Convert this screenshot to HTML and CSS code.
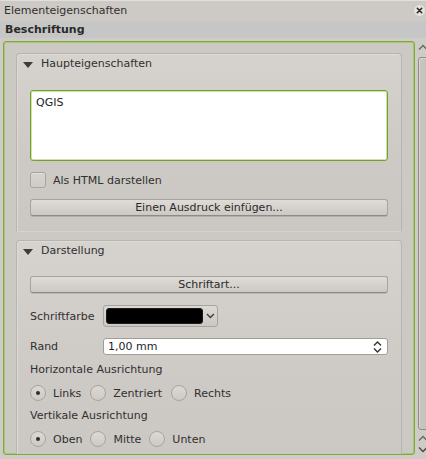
FILE: index.html
```html
<!DOCTYPE html>
<html lang="de">
<head>
<meta charset="utf-8">
<title>Elementeigenschaften</title>
<link rel="stylesheet" href="styles.css">
</head>
<body>
<div class="window">
  <div class="titlebar">
    <span class="title">Elementeigenschaften</span>
    <span class="close">
      <svg width="11" height="11" viewBox="0 0 11 11"><circle cx="5.5" cy="5.5" r="5.5" fill="#e6e2de"/><path d="M3.3 3.3 L7.7 7.7 M7.7 3.3 L3.3 7.7" stroke="#2a2a2a" stroke-width="1.6" stroke-linecap="round"/></svg>
    </span>
  </div>
  <div class="header">Beschriftung</div>
  <div class="main">
    <div class="frame">
      <section class="group g1">
        <div class="group-head"><span class="tri"></span>Haupteigenschaften</div>
        <div class="textedit">QGIS</div>
        <div class="check"><span class="box"></span><span>Als HTML darstellen</span></div>
        <div class="btn btn-expr">Einen Ausdruck einfügen...</div>
      </section>
      <section class="group g2">
        <div class="group-head"><span class="tri"></span>Darstellung</div>
        <div class="btn btn-font">Schriftart...</div>
        <div class="row row-color">
          <span class="lbl">Schriftfarbe</span>
          <div class="colorbtn">
            <span class="swatch"></span>
            <svg class="chev" width="9" height="6" viewBox="0 0 9 6"><path d="M1 1 L4.5 4.5 L8 1" fill="none" stroke="#3a3a3a" stroke-width="1.4"/></svg>
          </div>
        </div>
        <div class="row row-rand">
          <span class="lbl">Rand</span>
          <div class="spin">
            <span>1,00 mm</span>
            <svg class="spin-arrows" width="9" height="14" viewBox="0 0 9 14"><path d="M1 5.5 L4.5 2 L8 5.5 M1 8.5 L4.5 12 L8 8.5" fill="none" stroke="#333" stroke-width="1.4"/></svg>
          </div>
        </div>
        <div class="caption cap-h">Horizontale Ausrichtung</div>
        <div class="radios radios-h">
          <div class="radio"><span class="circle on"></span><span>Links</span></div>
          <div class="radio"><span class="circle"></span><span>Zentriert</span></div>
          <div class="radio"><span class="circle"></span><span>Rechts</span></div>
        </div>
        <div class="caption cap-v">Vertikale Ausrichtung</div>
        <div class="radios radios-v">
          <div class="radio"><span class="circle on"></span><span>Oben</span></div>
          <div class="radio"><span class="circle"></span><span>Mitte</span></div>
          <div class="radio"><span class="circle"></span><span>Unten</span></div>
        </div>
      </section>
    </div>
    <div class="scrollbar">
      <svg class="sb-up" width="8" height="7" viewBox="0 0 8 7"><path d="M1 5.5 L5 1.5 L9 5.5" fill="none" stroke="#6a6662" stroke-width="1.3"/></svg>
      <div class="handle"></div>
      <svg class="sb-up2" width="8" height="7" viewBox="0 0 8 7"><path d="M1 5.5 L5 1.5 L9 5.5" fill="none" stroke="#6a6662" stroke-width="1.3"/></svg>
      <svg class="sb-down" width="8" height="7" viewBox="0 0 8 7"><path d="M1 1.5 L5 5.5 L9 1.5" fill="none" stroke="#4a4642" stroke-width="1.3"/></svg>
    </div>
  </div>
</div>
</body>
</html>
```

FILE: styles.css
```css
* { box-sizing: border-box; }
html, body { margin: 0; padding: 0; }
body {
  background: #cfcbc7;
  font-family: "DejaVu Sans", "Liberation Sans", sans-serif;
  font-size: 11px;
  color: #303030;
}
.window {
  width: 426px;
  height: 459px;
  overflow: hidden;
  display: flex;
  flex-direction: column;
}
.titlebar {
  height: 21px;
  flex: none;
  border-top: 1px solid #e2dfdb;
  background: #cdc9c5;
  display: flex;
  align-items: center;
  justify-content: space-between;
  padding: 0 1px 0 4px;
}
.title { line-height: 14px; }
.close { display: flex; width: 11px; height: 11px; margin-top: -1px; }
.header {
  height: 17px;
  flex: none;
  background: #c6c6c6;
  font-weight: bold;
  line-height: 17px;
  padding-left: 5px;
  color: #2a2a2a;
}
.main {
  flex: none;
  margin-top: 3px;
  display: flex;
  align-items: flex-start;
}
.frame {
  width: 412px;
  height: 414px;
  margin-left: 3px;
  border: 1px solid #7eaa3c;
  box-shadow: inset 0 0 0 1px #a7c775;
  border-radius: 3px;
  overflow: hidden;
  padding: 11px 12px 0 12px;
  background: #ccc8c4;
}
.group {
  border: 1px solid #b8b4b0;
  border-bottom-color: transparent;
  border-radius: 4px 4px 0 0;
  background: linear-gradient(#d6d2ce, #cdc9c5 60%, #cbc7c3);
  box-shadow: inset 1px 1px 0 #dedad6;
  padding: 0 13px;
}
.g1 { height: 179px; }
.g2 { margin-top: 8px; height: 240px; }
.group-head {
  height: 19px;
  display: flex;
  align-items: center;
  padding-left: 6px;
  margin-left: -13px;
}
.tri {
  width: 0; height: 0;
  border-left: 5px solid transparent;
  border-right: 5px solid transparent;
  border-top: 6px solid #3c3c3c;
  margin-right: 8px;
  margin-top: 2px;
}
.textedit {
  margin-top: 17px;
  height: 71px;
  background: #fff;
  border: 1px solid #73a22c;
  box-shadow: inset 0 0 0 1px #cde2ad;
  border-radius: 3px;
  padding: 5px 5px;
  line-height: 13px;
  color: #1e1e1e;
}
.check {
  margin-top: 11px;
  height: 16px;
  display: flex;
  align-items: center;
  gap: 7px;
}
.box {
  width: 16px; height: 16px;
  border: 1px solid #a8a4a0;
  border-radius: 3px;
  background: linear-gradient(#d8d4d0, #cfcbc7);
  box-shadow: inset 0 1px 0 #e4e0dc;
}
.btn {
  height: 17px;
  border: 1px solid #a7a39f;
  border-bottom-color: #8e8a86;
  border-radius: 3px;
  background: linear-gradient(#dfdbd7, #ccc8c4);
  box-shadow: 0 1px 0 rgba(0,0,0,0.12);
  text-align: center;
  line-height: 15px;
  color: #2a2a2a;
}
.btn-expr { margin-top: 11px; }
.btn-font { margin-top: 16px; }
.row { display: flex; align-items: center; }
.lbl { width: 73px; flex: none; }
.row-color { margin-top: 12px; height: 22px; }
.colorbtn {
  width: 115px;
  height: 22px;
  border: 1px solid #a7a39f;
  border-radius: 3px;
  background: linear-gradient(#dcd8d4, #cbc7c3);
  display: flex;
  align-items: center;
  padding: 0 2px;
}
.swatch {
  width: 99px;
  height: 16px;
  background: #000;
  border-radius: 3px;
  border: 1px solid #1a1a1a;
}
.chev { margin-left: 3px; }
.row-rand { margin-top: 11px; height: 17px; }
.spin {
  width: 285px;
  height: 17px;
  background: #fff;
  border: 1px solid #a19d99;
  border-radius: 3px;
  display: flex;
  align-items: center;
  justify-content: space-between;
  padding: 0 5px 0 4px;
  color: #1e1e1e;
}
.caption { height: 16px; line-height: 16px; margin-top: 7px; }
.radios { margin-top: 7px; height: 16px; display: flex; align-items: center; gap: 8px; }
.radios-h { gap: 9px; }
.radio { display: flex; align-items: center; gap: 7px; }
.circle {
  width: 16px; height: 16px;
  border-radius: 50%;
  border: 1px solid #a7a39f;
  background: linear-gradient(#dcd8d4, #cdc9c5);
  display: flex;
  align-items: center;
  justify-content: center;
}
.circle.on::after {
  content: "";
  width: 4px; height: 4px;
  border-radius: 50%;
  background: #2e2e2e;
}
.scrollbar {
  width: 8px;
  height: 414px;
  margin-left: 3px;
  overflow: hidden;
  display: flex;
  flex-direction: column;
  align-items: flex-start;
}
.sb-up { margin-top: 3px; flex: none; }
.handle {
  margin-top: 6px;
  width: 12px;
  height: 373px;
  flex: none;
  border: 1px solid #8f8b87;
  border-radius: 3px;
  background: linear-gradient(90deg, #c9c5c1, #c3bfbb);
  box-shadow: inset 1px 1px 0 #dad6d2;
}
.sb-up2 { margin-top: 5px; flex: none; }
.sb-down { margin-top: 4px; flex: none; }
```
